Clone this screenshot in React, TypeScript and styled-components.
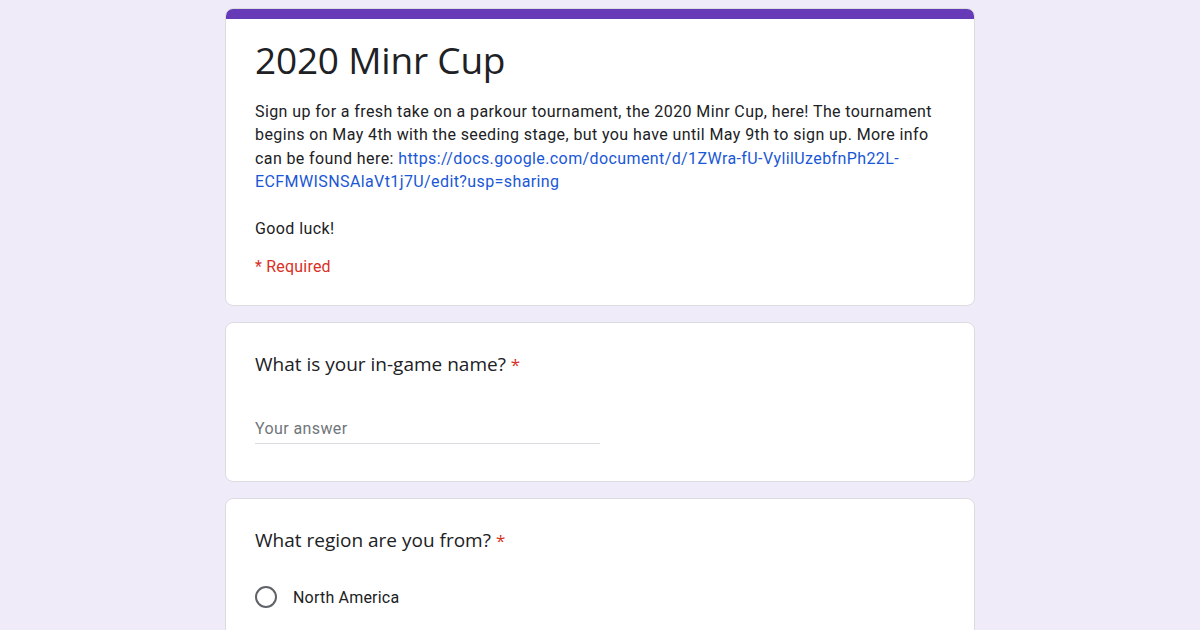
import React from 'react';
import styled, { createGlobalStyle } from 'styled-components';

const GlobalStyle = createGlobalStyle`
    body {
        margin: 0;
        background: #f0ebf8;
        font-family: Roboto, Arial, sans-serif;
    }
`;

const Page = styled.div`
    display: flex;
    flex-direction: column;
    align-items: center;
    gap: 16px;
    padding-top: 8px;
    height: 630px;
    overflow: hidden;
`;

const Card = styled.div`
    width: 750px;
    box-sizing: border-box;
    background: #fff;
    border: 1px solid #dadce0;
    border-radius: 8px;
    overflow: hidden;
    flex-shrink: 0;
`;

const Band = styled.div`
    height: 10px;
    background: #673ab7;
`;

const HeaderBody = styled.div`
    padding: 20px 29px 28px;
`;

const Title = styled.h1`
    margin: 0 0 20px;
    font-family: 'Open Sans', Arial, sans-serif;
    font-weight: 400;
    font-size: 37px;
    line-height: 41px;
    color: #202124;
    letter-spacing: -0.2px;
`;

const Description = styled.p`
    margin: 0;
    font-size: 16px;
    line-height: 23.4px;
    color: #202124;
    letter-spacing: 0.4px;

    a {
        color: #1a57d6;
        text-decoration: none;
    }
`;

const Required = styled.div`
    margin-top: 17px;
    font-size: 16px;
    line-height: 20px;
    color: #d93025;
    letter-spacing: 0.2px;
`;

const QuestionBody = styled.div<{ $bottom: number }>`
    padding: 29px 29px ${p => p.$bottom}px;
`;

const Question = styled.div`
    font-family: 'Open Sans', Arial, sans-serif;
    font-size: 19px;
    line-height: 24px;
    color: #202124;

    span {
        color: #d93025;
        margin-left: 5px;
        font-size: 17px;
    }
`;

const Answer = styled.div`
    margin-top: 42px;
    width: 345px;
    padding-bottom: 4px;
    border-bottom: 1px solid #dadce0;
    font-size: 16px;
    line-height: 20px;
    color: #70757a;
    letter-spacing: 0.4px;
`;

const Option = styled.label`
    display: flex;
    align-items: center;
    gap: 16px;
    margin-top: 33px;
    font-size: 16px;
    color: #202124;
    letter-spacing: 0.2px;
`;

const Radio = styled.span`
    width: 22px;
    height: 22px;
    box-sizing: border-box;
    border: 2px solid #5f6368;
    border-radius: 50%;
`;

export default function App() {
    return (
        <Page>
            <GlobalStyle />
            <Card>
                <Band />
                <HeaderBody>
                    <Title>2020 Minr Cup</Title>
                    <Description>
                        Sign up for a fresh take on a parkour tournament, the 2020 Minr Cup, here! The tournament
                        begins on May 4th with the seeding stage, but you have until May 9th to sign up. More info
                        can be found here:{' '}
                        <a href="#">
                            https://docs.google.com/document/d/1ZWra-fU-VylilUzebfnPh22L-ECFMWISNSAlaVt1j7U/edit?usp=sharing
                        </a>
                        <br />
                        <br />
                        Good luck!
                    </Description>
                    <Required>* Required</Required>
                </HeaderBody>
            </Card>
            <Card>
                <QuestionBody $bottom={37}>
                    <Question>
                        What is your in-game name?<span>*</span>
                    </Question>
                    <Answer>Your answer</Answer>
                </QuestionBody>
            </Card>
            <Card>
                <QuestionBody $bottom={40}>
                    <Question>
                        What region are you from?<span>*</span>
                    </Question>
                    <Option>
                        <Radio />
                        North America
                    </Option>
                </QuestionBody>
            </Card>
        </Page>
    );
}
